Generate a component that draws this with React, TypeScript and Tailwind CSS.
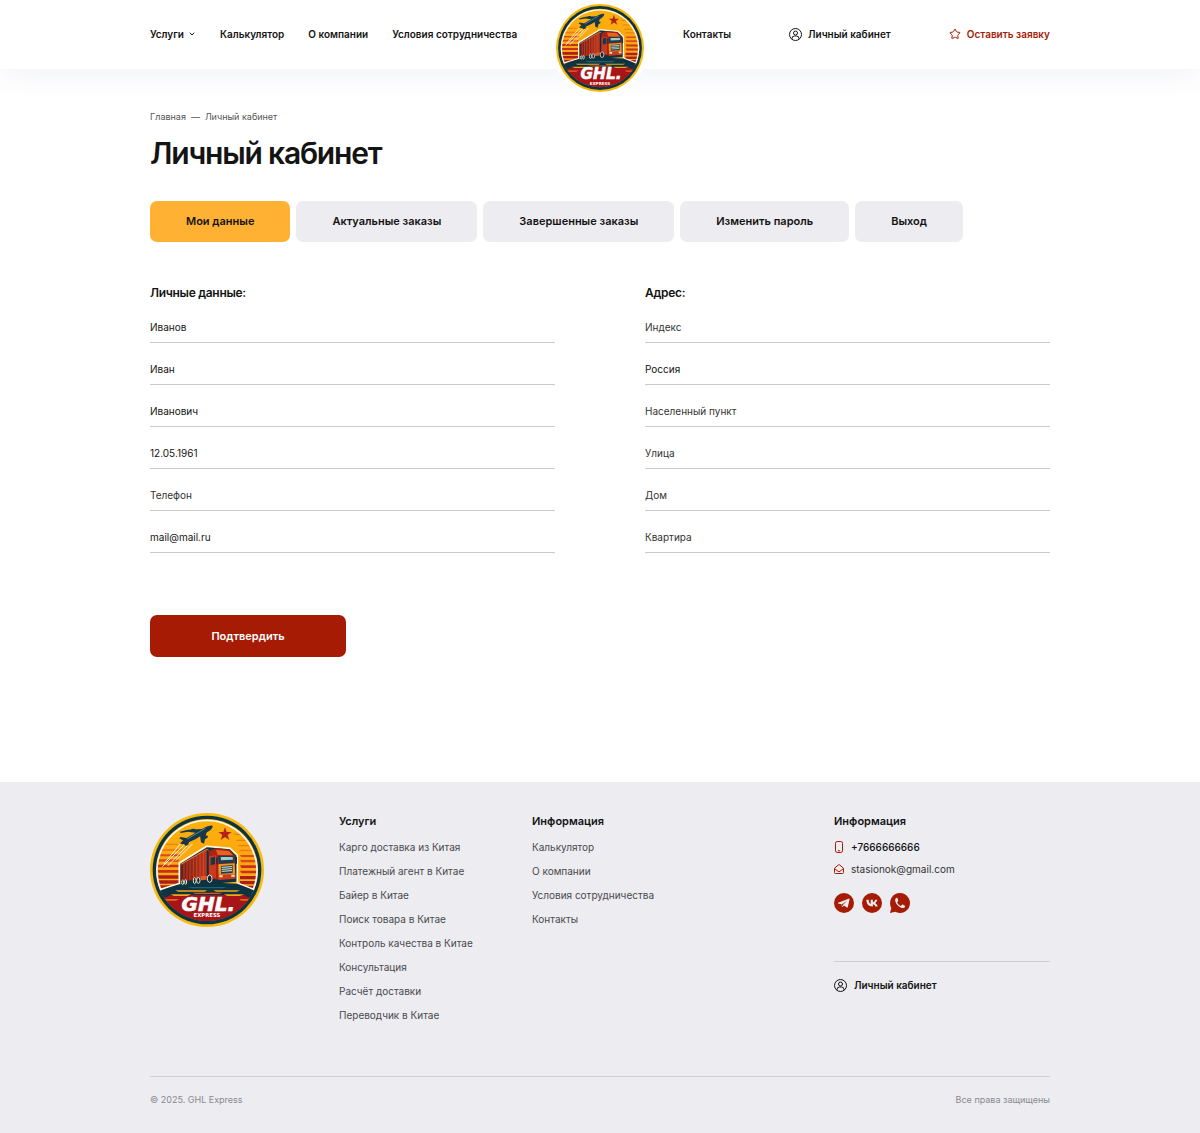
import { useState } from "react";
import { ChevronDown, Star } from "lucide-react";

const tabs = ["Мои данные", "Актуальные заказы", "Завершенные заказы", "Изменить пароль", "Выход"];

const personalFields = [
  { name: "surname", label: "Фамилия", type: "text", value: "Иванов" },
  { name: "name", label: "Имя", type: "text", value: "Иван" },
  { name: "patronymic", label: "Отчество", type: "text", value: "Иванович" },
  { name: "birthday", label: "Дата рождения", type: "text", value: "12.05.1961" },
  { name: "phone", label: "Телефон", type: "tel", value: "" },
  { name: "email", label: "E-mail", type: "email", value: "mail@mail.ru" },
];

const addressFields = [
  { name: "zip", label: "Индекс", type: "text", value: "" },
  { name: "country", label: "Страна", type: "text", value: "Россия" },
  { name: "city", label: "Населенный пункт", type: "text", value: "" },
  { name: "street", label: "Улица", type: "text", value: "" },
  { name: "house", label: "Дом", type: "text", value: "" },
  { name: "flat", label: "Квартира", type: "text", value: "" },
];

const serviceLinks = [
  "Карго доставка из Китая",
  "Платежный агент в Китае",
  "Байер в Китае",
  "Поиск товара в Китае",
  "Контроль качества в Китае",
  "Консультация",
  "Расчёт доставки",
  "Переводчик в Китае",
];

const infoLinks = ["Калькулятор", "О компании", "Условия сотрудничества", "Контакты"];

/* ─── Logo ─── */
function Logo({ id, className }: { id: string; className: string }) {
  return (
    <svg viewBox="0 0 342 342" className={className} role="img" aria-label="GHL Express">
      <defs>
        <clipPath id={`${id}-disc`}>
          <circle cx="171" cy="171" r="153" />
        </clipPath>
        <linearGradient id={`${id}-sky`} x1="0" y1="0" x2="0" y2="1">
          <stop offset="0" stopColor="#fbb30a" />
          <stop offset="0.45" stopColor="#fba60f" />
          <stop offset="1" stopColor="#f6c04a" />
        </linearGradient>
        <linearGradient id={`${id}-trailer`} x1="0" y1="0" x2="1" y2="0">
          <stop offset="0" stopColor="#6f1a17" />
          <stop offset="1" stopColor="#c2371d" />
        </linearGradient>
      </defs>
      <circle cx="171" cy="171" r="171" fill="#f6b90c" />
      <circle cx="171" cy="171" r="163" fill="#0d3442" />
      <g clipPath={`url(#${id}-disc)`}>
        <rect width="342" height="342" fill={`url(#${id}-sky)`} />
        {/* Sunset stripes */}
        <g fill="#ee7d1a">
          <path d="M20 92h60l6 2-6 2H20zM250 62h60v4h-54zM262 80h60v4h-66zM268 96h60v4h-66z" />
          <path d="M10 108h82l6 3-6 3H10zM272 110h60v5h-66z" />
        </g>
        <g fill="#dc4a1b">
          <path d="M10 124h80v6H10zM270 126h66v6h-62zM10 139h76v7H10zM270 141h66v7h-62z" />
        </g>
        <g fill="#c8301a">
          <path d="M10 155h78v8H10zM270 157h66v8h-62zM10 171h78v8H10zM270 173h66v8h-62z" />
        </g>
        <g fill="#ad1e17">
          <path d="M10 187h78v10H10zM270 189h66v10h-66zM10 202h78v10H10zM270 204h66v10h-66zM10 217h78v10H10zM270 218h66v10h-66z" />
        </g>
      </g>
      {/* Frame of the sky */}
      <path
        d="M32 229A150 150 0 1 1 310 229L262 210V126L240 106L170 100L88 150V212z"
        fill="none" stroke="#fffaf0" strokeWidth="5" strokeLinejoin="round"
      />

      {/* Road and ground */}
      <g clipPath={`url(#${id}-disc)`}>
        <path d="M0 246Q34 230 88 214L171 208L262 212Q308 230 342 246V342H0z" fill="#0d3442" />
        <path d="M112 222h120l-14 4h-92z" fill="#1f6270" />
        <path d="M76 232h96l-8 4H84zM190 232h80l-10 4h-62z" fill="#f0a51b" />
        <path d="M128 239h90l-10 4h-72z" fill="#d7571c" />
        <path d="M22 246H320Q304 330 171 330T22 246z" fill="#a81519" />
        <path d="M26 240h74l-14 6h-26l-8 6H30zM316 240h-70l12 6h26l8 6h20z" fill="#0d3442" />
        <path d="M62 244h62l-12 5H72zM222 244h60l-12 5h-38z" fill="#f0a51b" />
        <path d="M40 258h48l-10 5H44zM268 258h36l-6 5h-24z" fill="#e36a1c" />
        <path d="M30 276Q70 322 171 324T312 276V342H30z" fill="#a81519" />
      </g>

      {/* Contrails */}
      <g stroke="#fff3da" strokeLinecap="round" fill="none">
        <path d="M90 94L42 152" strokeWidth="3" />
        <path d="M100 98L38 160" strokeWidth="3" />
        <path d="M112 98L54 158" strokeWidth="3" />
        <path d="M126 94L78 142" strokeWidth="3" />
      </g>

      {/* Plane */}
      <g fill="#16384a">
        <path d="M90 91Q96 82 110 75L160 46Q176 36 188 38Q189 46 176 55L136 79Q112 91 98 94z" />
        <path d="M140 60L114 56L92 60L90 56L114 50L158 48z" />
        <path d="M150 68L153 88L162 92L170 56z" />
        <path d="M112 76L92 72L88 76L102 84z" />
        <path d="M100 90L106 98L114 96L118 84z" />
        <ellipse cx="130" cy="50" rx="7" ry="3" />
        <ellipse cx="167" cy="73" rx="7" ry="4" transform="rotate(-30 167 73)" />
      </g>
      <path d="M112 78L166 46" stroke="#5f8790" strokeWidth="3" />

      {/* Star */}
      <path d="M225 42L230 57L245 57L233 66L238 81L225 72L212 81L217 66L205 57L220 57z" fill="#b5201a" />

      {/* Truck */}
      <path d="M91 152L171 103L239 109L259 128V206L190 212L91 214z" fill="#10323f" />
      <path d="M93 154L170 109V194L93 206z" fill={`url(#${id}-trailer)`} />
      <path d="M102 150V205M111 145V203M120 140V202M130 134V200M140 128V199M150 122V197M160 116V196" stroke="#d95527" strokeWidth="2" />
      <path d="M93 154L170 109L176 112" fill="none" stroke="#f0803a" strokeWidth="3" />
      <path d="M176 114L198 106L238 110L254 128L256 196L206 200L176 196z" fill="#a92318" />
      <path d="M198 111L236 114L249 127L203 126z" fill="#e8641d" />
      <path d="M177 130L198 126V196L177 190z" fill="#c93a1d" />
      <path d="M182 134L195 131V154L182 157z" fill="#12394a" />
      <path d="M204 128L251 128L253 149L207 152z" fill="#173f4f" />
      <path d="M212 132L248 132L249 140L213 142z" fill="#a9c9c6" />
      <path d="M205 154L254 151L256 194L206 197z" fill="#f2941e" />
      <path d="M213 159L248 156V180L213 182z" fill="#173f4f" />
      <path d="M215 163L246 161M215 169L246 167M215 175L246 173" stroke="#efe6cf" strokeWidth="3" />
      <path d="M206 185L256 183V197L206 201z" fill="#c93a1d" />
      <path d="M208 187h10v6h-10zM244 185h10v6h-10z" fill="#ffe9a8" />
      <path d="M201 134v20M259 132v20" stroke="#0d3442" strokeWidth="4" />
      <g fill="#0a2631" stroke="#efe6cf" strokeWidth="3">
        <ellipse cx="179" cy="197" rx="7" ry="11" />
        <ellipse cx="145" cy="202" rx="5" ry="9" />
        <ellipse cx="134" cy="203" rx="4" ry="9" />
        <ellipse cx="107" cy="207" rx="3" ry="7" />
        <ellipse cx="98" cy="208" rx="3" ry="7" />
      </g>
      <path d="M152 190L170 188V200L152 202z" fill="#e2592a" />

      <text textAnchor="middle" fill="#fff" fontWeight="700" fontFamily="'DejaVu Sans', sans-serif">
        <tspan x="175" y="293" fontSize="60" fontStyle="italic" stroke="#fff" strokeWidth="2">GHL.</tspan>
        <tspan x="171" y="313" fontSize="16">EXPRESS</tspan>
      </text>
    </svg>
  );
}

/* ─── Icons ─── */
function UserIcon() {
  return (
    <svg viewBox="0 0 26 26" className="size-[13px] shrink-0" fill="none" stroke="currentColor" strokeWidth="2" aria-hidden="true">
      <circle cx="13" cy="13" r="12" />
      <circle cx="13" cy="10" r="4" />
      <path d="M6 22.500V21a5 5 0 0 1 5-5h4a5 5 0 0 1 5 5v1.500" />
    </svg>
  );
}

function PhoneIcon() {
  return (
    <svg viewBox="0 0 20 24" className="h-3 w-[10px] shrink-0 text-[#a61b03]" fill="none" stroke="currentColor" strokeWidth="2" aria-hidden="true">
      <rect x="3" y="1" width="14" height="22" rx="3.500" />
      <path d="M8.500 19.500h3" strokeLinecap="round" />
    </svg>
  );
}

function MailIcon() {
  return (
    <svg viewBox="0 0 20 20" className="size-[10px] shrink-0 text-[#a61b03]" fill="none" stroke="currentColor" strokeWidth="2" strokeLinejoin="round" aria-hidden="true">
      <path d="M1 8.500L8.500 2a2.500 2.500 0 0 1 3 0L19 8.500V17a2 2 0 0 1-2 2H3a2 2 0 0 1-2-2z" />
      <path d="M1.500 9.500L8 14.500a3.200 3.200 0 0 0 4 0L18.500 9.500" />
    </svg>
  );
}

function TelegramIcon() {
  return (
    <svg viewBox="0 0 60 60" className="size-5" aria-hidden="true">
      <circle cx="30" cy="30" r="30" fill="#a61b03" />
      <path d="M12 29.500L44 17c2-.7 3 .3 2.600 2.400L41.500 42c-.5 2-1.800 2.300-3.300 1.300L30 37.500l-4 4c-1 1-2 .8-2.200-.6L22.500 34 12.500 31.200c-1.600-.4-1.600-1.200-.5-1.700z" fill="#ececf1" />
      <path d="M23 34.500L39.500 23 27 35.500l-1 5z" fill="#a61b03" />
    </svg>
  );
}

function VkIcon() {
  return (
    <svg viewBox="0 0 60 60" className="size-5" aria-hidden="true">
      <circle cx="30" cy="30" r="30" fill="#a61b03" />
      <path d="M31.500 40.500C20.500 40.500 13.200 33 13 20.500h7c.2 8.200 3.200 12 6 12.800V20.500h6.600v7.400c3-.4 5.700-3.700 6.800-7.400H46c-.9 4.900-4.300 8.300-6.700 9.800 2.600 1.300 6.300 4.600 7.900 10.200h-7.300c-1.200-3.500-3.700-6-7.300-6.500v6.500z" fill="#ececf1" />
    </svg>
  );
}

function WhatsappIcon() {
  return (
    <svg viewBox="0 0 60 60" className="size-5" aria-hidden="true">
      <path d="M30 0a30 30 0 1 1-14.500 56.300L0 60l4-15.200A30 30 0 0 1 30 0z" fill="#a61b03" />
      <path d="M22.500 15.500c-1-1.700-2.700-1.600-4-.4-2 1.800-3.300 4.200-2.900 7.300C17 33 26.500 42.800 37.500 45c3.500.6 6.300-1.200 7.700-4.100.6-1.400.3-2.400-.8-3l-6-3.200c-1.100-.6-2-.3-2.700.6l-2 2.600c-.6.700-1.300.8-2.200.4-4.500-2-7.600-5.200-9.600-9.300-.4-.8-.2-1.500.4-2.100l1.900-2.200c.6-.7.7-1.500.4-2.300z" fill="#ececf1" />
    </svg>
  );
}

type FieldData = { name: string; label: string; type: string; value: string };

function Fieldset({ title, fields }: { title: string; fields: FieldData[] }) {
  return (
    <fieldset>
      <legend className="mb-2.5 text-xs leading-4 font-semibold tracking-tight">{title}</legend>
      {fields.map((field) => (
        <div key={field.name} className="h-[42px]">
          <input
            name={field.name}
            type={field.type}
            aria-label={field.label}
            defaultValue={field.value}
            placeholder={field.label}
            className="block h-8 w-full border-b border-[#cacaca] bg-transparent text-[10px] leading-4 text-[#141414] outline-none placeholder:text-[#333333] focus:border-[#a61b03]"
          />
        </div>
      ))}
    </fieldset>
  );
}

function FooterLinks({ title, links }: { title: string; links: string[] }) {
  return (
    <nav aria-label={title}>
      <h3 className="text-[11px] leading-4 font-semibold">{title}</h3>
      <ul className="mt-1.5 text-[10px] leading-6 text-[#4a4a4d]">
        {links.map((link) => (
          <li key={link}>
            <a href="#">{link}</a>
          </li>
        ))}
      </ul>
    </nav>
  );
}

function Header() {
  return (
    <header className="h-[69px] bg-white px-6 text-[10px] leading-4 font-semibold shadow-[0_4px_30px_rgba(60,80,140,0.08)]">
      <div className="mx-auto grid max-w-[900px] grid-cols-[1fr_88px_1fr]">
        <nav className="flex h-[68px] items-center gap-6 whitespace-nowrap" aria-label="Основное меню">
          <button type="button" className="flex items-center gap-1">
            Услуги
            <ChevronDown className="size-2" strokeWidth={3} />
          </button>
          <a href="#">Калькулятор</a>
          <a href="#">О компании</a>
          <a href="#">Условия сотрудничества</a>
        </nav>
        <a href="#" className="-mx-1 size-24 rounded-full bg-white p-1">
          <Logo id="header-logo" className="size-[88px]" />
        </a>
        <div className="flex h-[68px] items-center justify-between pl-[39px] whitespace-nowrap">
          <a href="#">Контакты</a>
          <a href="#" className="flex items-center gap-1.5">
            <UserIcon />
            Личный кабинет
          </a>
          <a href="#" className="flex items-center gap-1.5 text-[#a61b03]">
            <Star className="size-3" strokeWidth={2} />
            Оставить заявку
          </a>
        </div>
      </div>
    </header>
  );
}

function Footer() {
  return (
    <footer className="bg-[#ececf1] px-6">
      <div className="mx-auto max-w-[900px] pt-[31px]">
        <div className="grid grid-cols-[189fr_193fr_302fr_216fr]">
          <a href="#" className="size-[114px]">
            <Logo id="footer-logo" className="size-[114px]" />
          </a>
          <FooterLinks title="Услуги" links={serviceLinks} />
          <FooterLinks title="Информация" links={infoLinks} />
          <div className="text-[10px] leading-4">
            <h3 className="text-[11px] leading-4 font-semibold">Информация</h3>
            <a href="tel:+7666666666" className="mt-2.5 flex items-center gap-[7px] font-medium">
              <PhoneIcon />
              +7666666666
            </a>
            <a href="mailto:stasionok@gmail.com" className="mt-1.5 flex items-center gap-[7px] text-[#333333]">
              <MailIcon />
              stasionok@gmail.com
            </a>
            <div className="mt-4 flex gap-2">
              <a href="#" aria-label="Telegram"><TelegramIcon /></a>
              <a href="#" aria-label="VK"><VkIcon /></a>
              <a href="#" aria-label="WhatsApp"><WhatsappIcon /></a>
            </div>
            <div className="mt-12 border-t border-[#cfcfd4] pt-[15px]">
              <a href="#" className="flex items-center gap-[7px] font-semibold">
                <UserIcon />
                Личный кабинет
              </a>
            </div>
          </div>
        </div>
        <div className="mt-[49px] flex justify-between border-t border-[#cfcfd4] pt-[15px] pb-[26px] text-[9px] leading-4 text-[#8a8a8e]">
          <p>© 2025. GHL Express</p>
          <p>Все права защищены</p>
        </div>
      </div>
    </footer>
  );
}

export default function App() {
  const [activeTab, setActiveTab] = useState(tabs[0]);

  return (
    <div className="min-h-screen bg-[#ececf1] font-[Inter,sans-serif] text-[#141414]">
      <div className="bg-white">
        <Header />

        <main className="px-6">
          <div className="mx-auto max-w-[900px] pt-10 pb-[125px]">
            <nav className="flex gap-[5px] text-[9px] leading-4 text-[#555555]" aria-label="Навигация">
              <a href="#">Главная</a>
              <span>—</span>
              <span>Личный кабинет</span>
            </nav>
            <h1 className="mt-2 text-[30px] leading-10 font-semibold tracking-[-0.04em]">Личный кабинет</h1>

            <div className="mt-7 flex flex-wrap gap-1.5">
              {tabs.map((tab) => (
                <button
                  key={tab}
                  type="button"
                  onClick={() => setActiveTab(tab)}
                  className={`h-[41px] rounded-[7px] px-9 text-[11px] font-semibold ${
                    tab === activeTab ? "bg-[#ffb133]" : "bg-[#ececf1]"
                  }`}
                >
                  {tab}
                </button>
              ))}
            </div>

            <form className="mt-[43px]" onSubmit={(e) => e.preventDefault()}>
              <div className="grid grid-cols-2 gap-[90px]">
                <Fieldset title="Личные данные:" fields={personalFields} />
                <Fieldset title="Адрес:" fields={addressFields} />
              </div>
              <button
                type="submit"
                className="mt-[52px] h-[42px] w-[196px] rounded-[7px] bg-[#a61b03] text-[11px] font-semibold text-white"
              >
                Подтвердить
              </button>
            </form>
          </div>
        </main>
      </div>

      <Footer />
    </div>
  );
}
